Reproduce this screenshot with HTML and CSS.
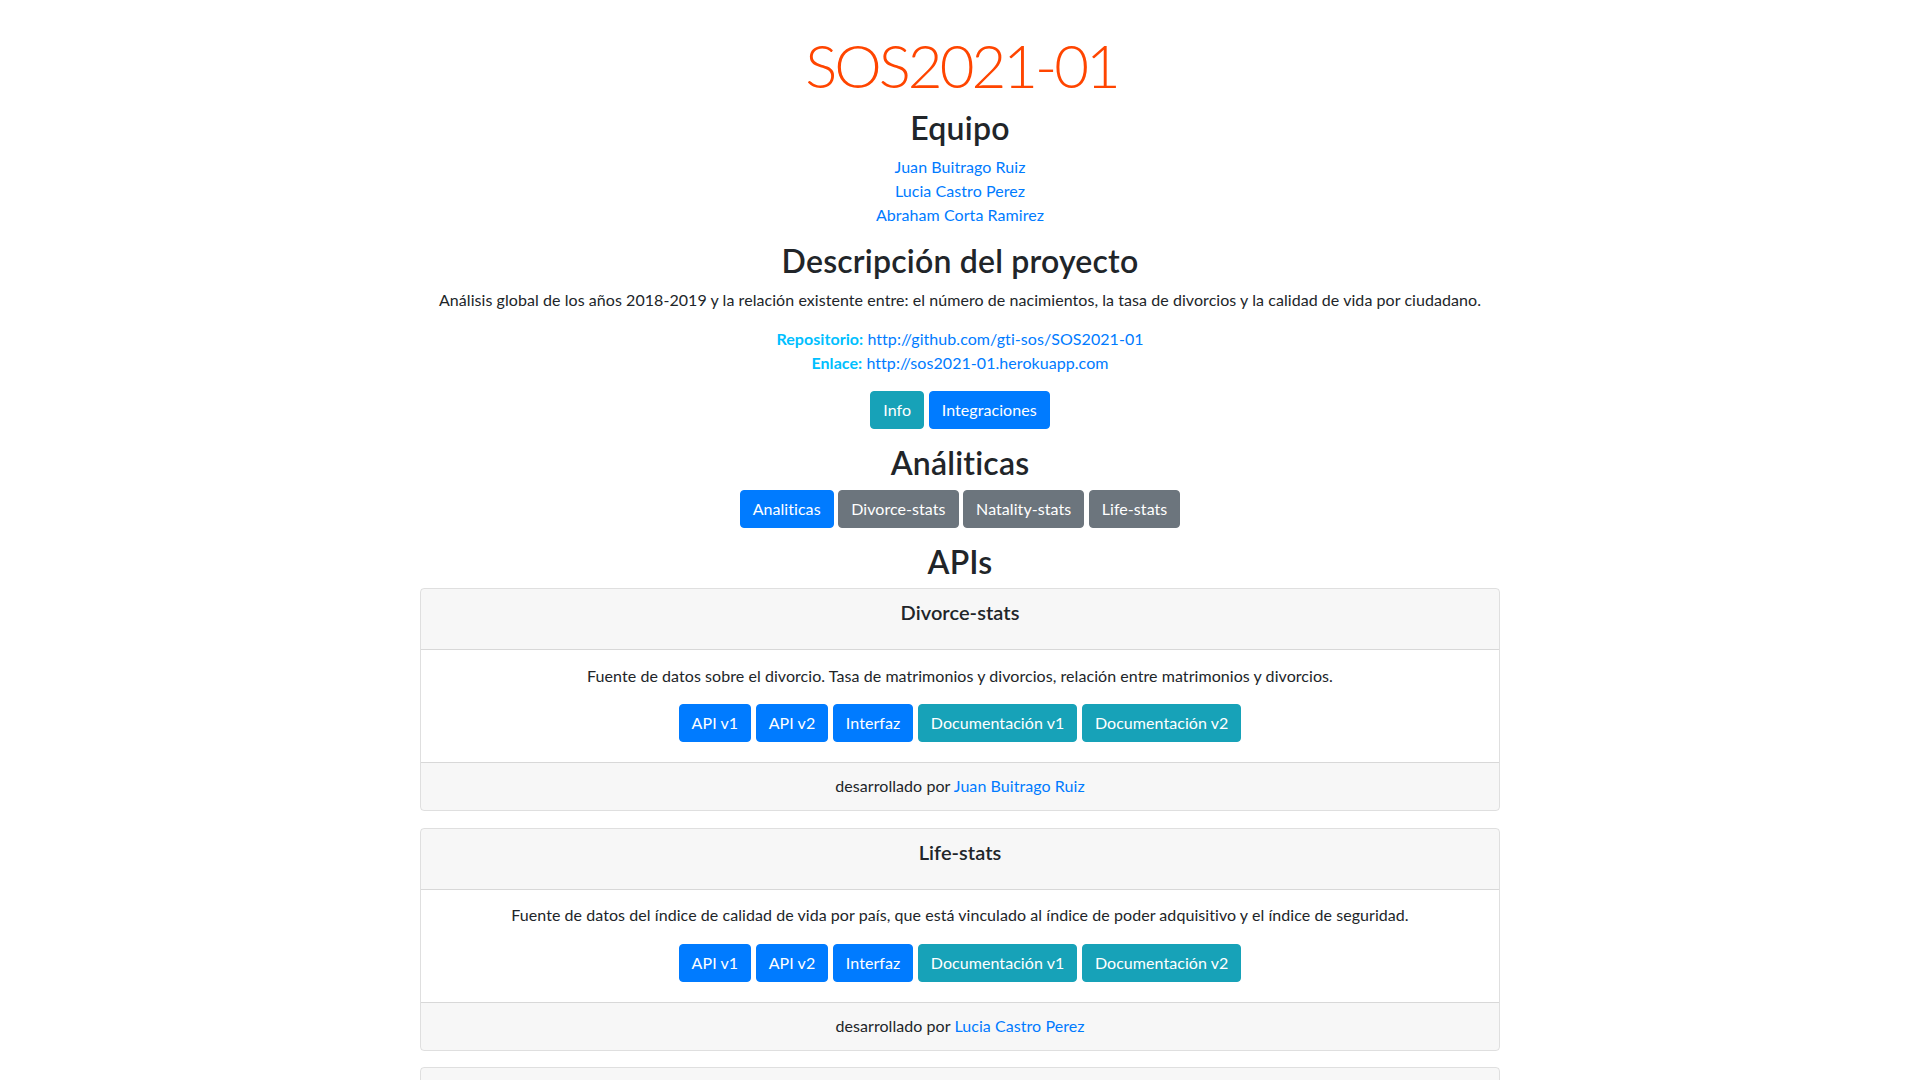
FILE: index.html
```html
<!DOCTYPE html>
<html lang="es">
<head>
<meta charset="utf-8">
<title>SOS2021-01</title>
<link rel="stylesheet" href="styles.css">
</head>
<body>
<main class="page">
  <h1 class="title">SOS2021-01</h1>

  <h2 class="heading heading-team">Equipo</h2>
  <ul class="team">
    <li><a href="#">Juan Buitrago Ruiz</a></li>
    <li><a href="#">Lucia Castro Perez</a></li>
    <li><a href="#">Abraham Corta Ramirez</a></li>
  </ul>

  <h2 class="heading heading-desc">Descripción del proyecto</h2>
  <p class="desc">Análisis global de los años 2018-2019 y la relación existente entre: el número de nacimientos, la tasa de divorcios y la calidad de vida por ciudadano.</p>

  <div class="links">
    <div><span class="label">Repositorio:</span> <a href="#">http://github.com/gti-sos/SOS2021-01</a></div>
    <div><span class="label">Enlace:</span> <a href="#">http://sos2021-01.herokuapp.com</a></div>
  </div>

  <div class="btn-row btn-row-info">
    <a class="btn btn-info" href="#">Info</a>
    <a class="btn btn-primary" href="#">Integraciones</a>
  </div>

  <h2 class="heading heading-analytics">Análiticas</h2>
  <div class="btn-row btn-row-analytics">
    <a class="btn btn-primary" href="#">Analiticas</a>
    <a class="btn btn-secondary" href="#">Divorce-stats</a>
    <a class="btn btn-secondary" href="#">Natality-stats</a>
    <a class="btn btn-secondary" href="#">Life-stats</a>
  </div>

  <h2 class="heading heading-apis">APIs</h2>

  <section class="card">
    <header class="card-header"><h5 class="card-title">Divorce-stats</h5></header>
    <div class="card-body">
      <p class="card-text">Fuente de datos sobre el divorcio. Tasa de matrimonios y divorcios, relación entre matrimonios y divorcios.</p>
      <div class="btn-row">
        <a class="btn btn-primary" href="#">API v1</a>
        <a class="btn btn-primary" href="#">API v2</a>
        <a class="btn btn-primary" href="#">Interfaz</a>
        <a class="btn btn-info" href="#">Documentación v1</a>
        <a class="btn btn-info" href="#">Documentación v2</a>
      </div>
    </div>
    <footer class="card-footer">desarrollado por <a href="#">Juan Buitrago Ruiz</a></footer>
  </section>

  <section class="card">
    <header class="card-header"><h5 class="card-title">Life-stats</h5></header>
    <div class="card-body">
      <p class="card-text">Fuente de datos del índice de calidad de vida por país, que está vinculado al índice de poder adquisitivo y el índice de seguridad.</p>
      <div class="btn-row">
        <a class="btn btn-primary" href="#">API v1</a>
        <a class="btn btn-primary" href="#">API v2</a>
        <a class="btn btn-primary" href="#">Interfaz</a>
        <a class="btn btn-info" href="#">Documentación v1</a>
        <a class="btn btn-info" href="#">Documentación v2</a>
      </div>
    </div>
    <footer class="card-footer">desarrollado por <a href="#">Lucia Castro Perez</a></footer>
  </section>

  <section class="card">
    <header class="card-header"><h5 class="card-title">Natality-stats</h5></header>
    <div class="card-body">
      <p class="card-text">Fuente de datos sobre la natalidad: número de nacimientos por país y año.</p>
      <div class="btn-row">
        <a class="btn btn-primary" href="#">API v1</a>
        <a class="btn btn-primary" href="#">API v2</a>
        <a class="btn btn-primary" href="#">Interfaz</a>
        <a class="btn btn-info" href="#">Documentación v1</a>
        <a class="btn btn-info" href="#">Documentación v2</a>
      </div>
    </div>
    <footer class="card-footer">desarrollado por <a href="#">Abraham Corta Ramirez</a></footer>
  </section>
</main>
</body>
</html>
```

FILE: styles.css
```css
* { box-sizing: border-box; }

html, body {
  margin: 0;
  padding: 0;
  background: #fff;
}

body {
  font-family: "Lato", "Open Sans", sans-serif;
  font-size: 16px;
  line-height: 24px;
  color: #212529;
  text-align: center;
  letter-spacing: 0.06px;
}

a {
  color: #007bff;
  text-decoration: none;
}

.page {
  width: 1080px;
  margin: 0 auto;
  display: flex;
  flex-direction: column;
  align-items: stretch;
}

.title {
  margin: 29px 0 0;
  padding-left: 3px;
  font-size: 60px;
  line-height: 72px;
  font-weight: 300;
  letter-spacing: -3px;
  color: #ff4500;
}

.heading {
  margin: 0;
  font-size: 32px;
  line-height: 38.4px;
  font-weight: 600;
  letter-spacing: 0.2px;
}

.heading-team { margin-top: 8px; }

.team {
  list-style: none;
  margin: 7.7px 0 0;
  padding: 0;
}

.heading-desc { margin-top: 15px; }

.desc {
  margin: 7.5px 0 0;
}

.links {
  margin-top: 15.3px;
}

.label {
  font-weight: 700;
  color: #00bfff;
}

.btn-row {
  display: flex;
  justify-content: center;
  gap: 4.6px;
}

.btn-row-info { margin-top: 16px; }
.btn-row-analytics { margin-top: 7.5px; }

.heading-analytics { margin-top: 15px; }
.heading-apis { margin-top: 14.5px; }

.btn {
  display: inline-block;
  padding: 6px 12px;
  border: 1px solid transparent;
  border-radius: 4px;
  font-size: 16px;
  line-height: 24px;
  color: #fff;
  white-space: nowrap;
}

.btn-primary { background: #007bff; border-color: #007bff; }
.btn-info { background: #17a2b8; border-color: #17a2b8; }
.btn-secondary { background: #6c757d; border-color: #6c757d; }

.card {
  margin-bottom: 16.5px;
  border: 1px solid rgba(0, 0, 0, 0.125);
  border-radius: 4px;
  overflow: hidden;
}

.heading-apis + .card { margin-top: 7px; }

.card-header {
  padding: 11px 20px 25px;
  background: rgba(0, 0, 0, 0.03);
  border-bottom: 1px solid rgba(0, 0, 0, 0.125);
}

.card-title {
  margin: 0;
  font-size: 20px;
  line-height: 24px;
  font-weight: 600;
}

.card-body {
  padding: 13.5px 20px 20px;
}

.card-text {
  margin: 0 0 16.5px;
}

.card-footer {
  padding: 11px 20px 12px;
  background: rgba(0, 0, 0, 0.03);
  border-top: 1px solid rgba(0, 0, 0, 0.125);
}
```
